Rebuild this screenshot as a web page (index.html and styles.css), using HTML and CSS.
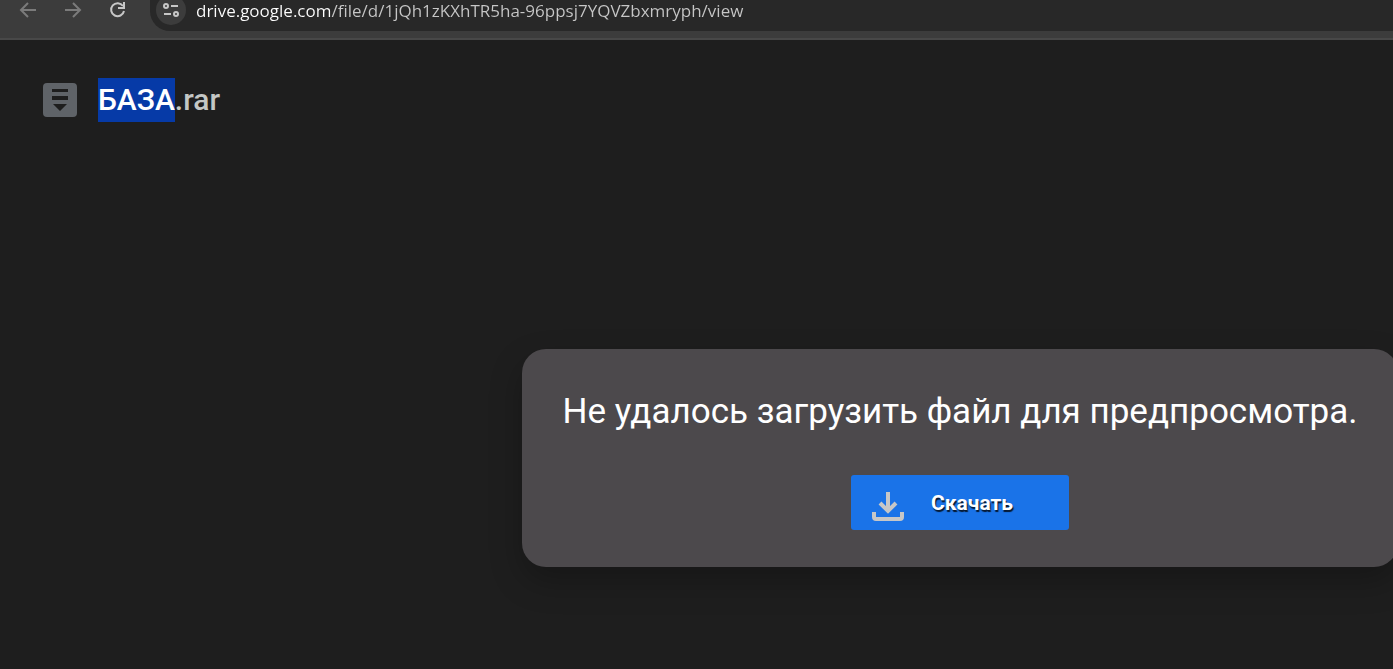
FILE: index.html
```html
<!DOCTYPE html>
<html lang="ru">
<head>
<meta charset="utf-8">
<title>БАЗА.rar</title>
<link rel="stylesheet" href="styles.css">
</head>
<body>

<nav class="toolbar">
  <button class="nav-btn" aria-label="Назад" disabled>
    <svg width="18" height="18" viewBox="0 0 18 18"><path d="M17 9H2M9 2L2 9l7 7"/></svg>
  </button>
  <button class="nav-btn" aria-label="Вперёд" disabled>
    <svg width="18" height="18" viewBox="0 0 18 18"><path d="M1 9h15M9 2l7 7-7 7"/></svg>
  </button>
  <button class="nav-btn" aria-label="Обновить">
    <svg width="18" height="18" viewBox="0 0 18 18"><path d="M14 5A6.500 6.500 0 1 0 15 10M15 1v6H9"/></svg>
  </button>
  <div class="address">
    <button class="site-info" aria-label="Сведения о сайте">
      <svg width="18" height="18" viewBox="0 0 18 18"><circle cx="4" cy="5" r="2"/><path d="M9 5h7M2 13h7"/><circle cx="14" cy="13" r="2"/></svg>
    </button>
    <input class="url" type="text" aria-label="Адрес" value="drive.google.com/file/d/1jQh1zKXhTR5ha-96ppsj7YQVZbxmryph/view">
  </div>
</nav>

<main class="viewer">
  <header class="file">
    <svg class="file-icon" width="34" height="34" viewBox="0 0 34 34">
      <rect width="34" height="34" rx="4" fill="#5f6368"/>
      <path d="M9 6h16v3H9zM9 13h16v4H9zM10 21h14l-7 7z" fill="#1e1e1e"/>
    </svg>
    <h1 class="file-name"><mark>БАЗА</mark>.rar</h1>
  </header>

  <section class="card">
    <p class="message">Не удалось загрузить файл для предпросмотра.</p>
    <button class="download">
      <svg width="32" height="32" viewBox="0 0 32 32"><path d="M16 1v20M8 12l8 8 8-8M2 21v5q0 2 2 2h24q2 0 2-2v-5"/></svg>
      <span>Скачать</span>
    </button>
  </section>
</main>

</body>
</html>
```
FILE: styles.css
```css
* { box-sizing: border-box; }

body {
  margin: 0;
  min-height: 100vh;
  display: flex;
  flex-direction: column;
  background: #1e1e1e;
  color: #fff;
  font-family: Roboto, sans-serif;
}

button {
  border: 0;
  padding: 0;
  font-family: inherit;
  color: inherit;
}

svg { display: block; }

/* browser bar */
.toolbar {
  display: flex;
  height: 40px;
  background: #3c3c3c;
  border-bottom: 2px solid #484848;
}

.nav-btn {
  width: 45px;
  height: 19px;
  display: flex;
  align-items: center;
  justify-content: center;
  background: none;
}
.nav-btn:first-child { margin-left: 5px; }

.nav-btn svg, .site-info svg, .download svg {
  fill: none;
  stroke: #c7c7c7;
  stroke-width: 2;
}
.nav-btn:disabled svg { stroke: #7b7b7b; }

.address {
  flex: 1;
  display: flex;
  height: 31px;
  margin-left: 10px;
  padding-left: 6px;
  background: #282828;
  border-bottom-left-radius: 20px;
}

.site-info {
  width: 30px;
  height: 30px;
  margin-top: -5px;
  display: flex;
  align-items: center;
  justify-content: center;
  border-radius: 50%;
  background: #3c3c3c;
}

.url {
  flex: 1;
  height: 22px;
  margin-left: 10px;
  padding: 0;
  border: 0;
  outline: 0;
  font: 17px/22px "Open Sans", sans-serif;
  /* the host is brighter than the rest of the address */
  color: transparent;
  background: linear-gradient(to right, #fff 134px, #c7c7c7 134px);
  -webkit-background-clip: text;
  background-clip: text;
}

/* file preview */
.viewer {
  flex: 1;
  display: flex;
  flex-direction: column;
  overflow: hidden;
}

.file {
  display: flex;
  align-items: center;
  gap: 21px;
  padding: 38px 43px 0;
}

.file-name {
  margin: 0;
  font-size: 30px;
  line-height: 44px;
  font-weight: 500;
  color: #c4c7c5;
}
.file-name mark {
  display: inline-block;
  background: #063aa7;
  color: #fff;
}

.card {
  align-self: flex-end;
  min-width: 876px;
  margin: 227px -5px 0 0;
  padding: 38px 37px 37px;
  display: flex;
  flex-direction: column;
  align-items: center;
  border-radius: 24px;
  background: #4c494c;
  box-shadow: 0 14px 32px rgba(0, 0, 0, 0.25);
}

.message {
  margin: 0 0 38px;
  font-size: 35px;
  line-height: 50px;
  white-space: nowrap;
}

.download {
  width: 218px;
  height: 55px;
  padding-left: 21px;
  display: flex;
  align-items: center;
  gap: 27px;
  border-radius: 3px;
  background: #1a73e8;
  font-size: 21px;
  font-weight: 700;
  text-shadow: 1px 2px 1px rgba(0, 0, 0, 0.8);
}
.download svg {
  margin-top: 8px;
  stroke: #c7c7c7;
  stroke-width: 4;
}
```
